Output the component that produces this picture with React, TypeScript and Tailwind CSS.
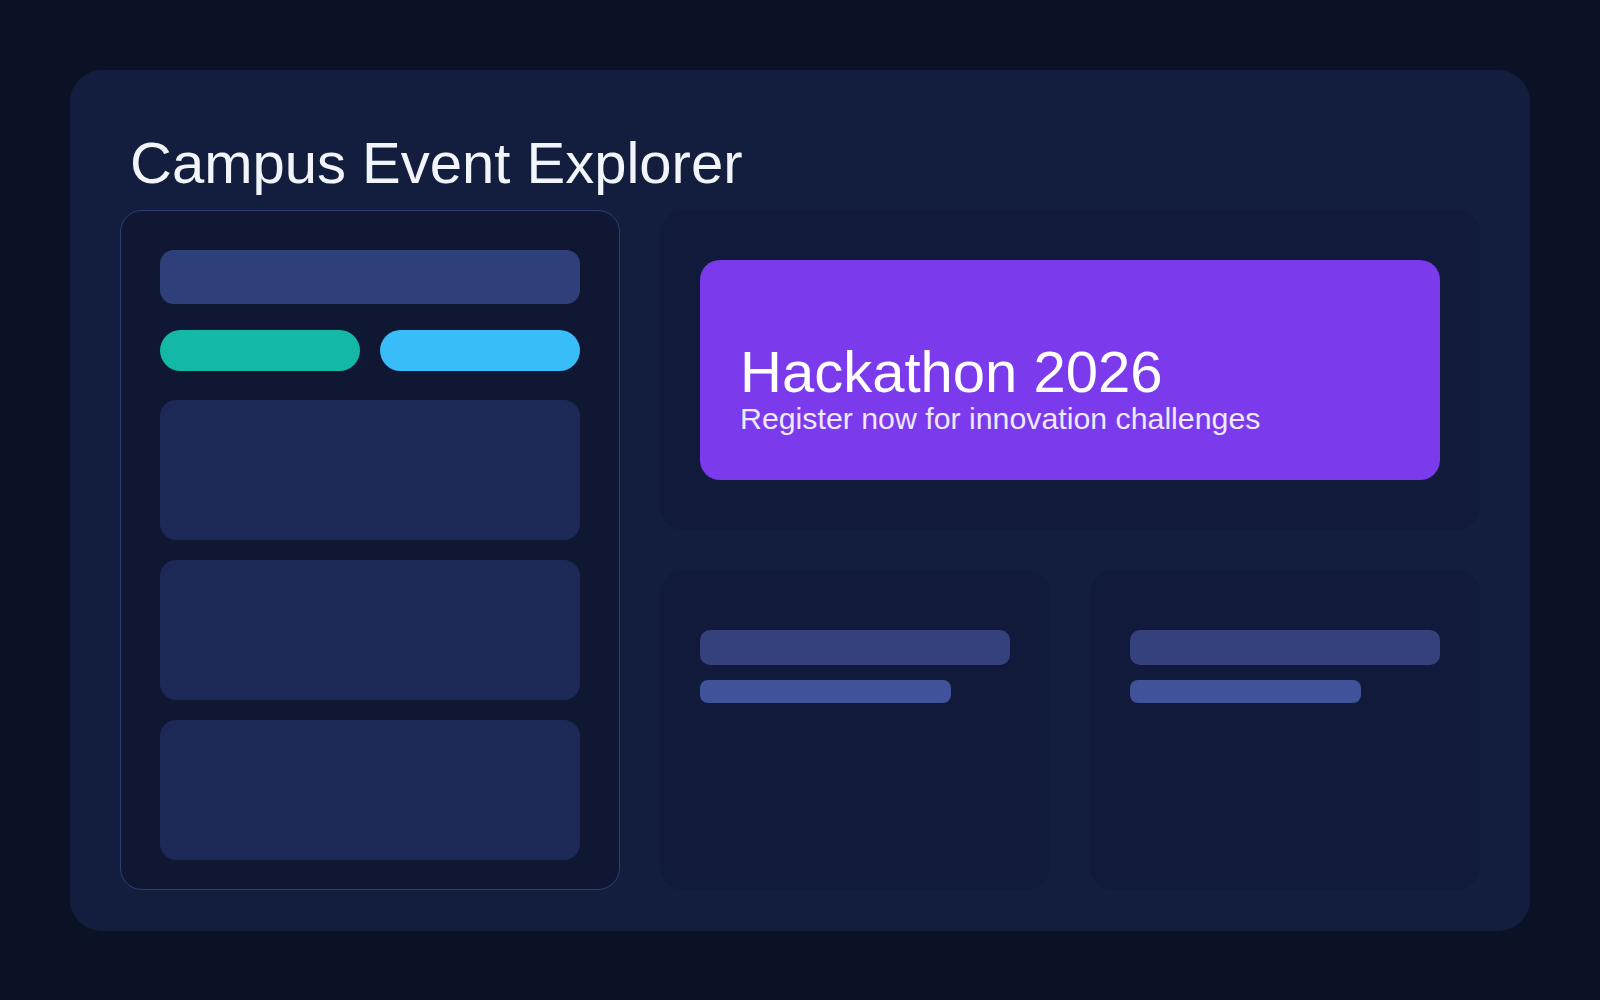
export default function App() {
  return (
    <div className="min-h-screen bg-[#0b1226] p-[70px] font-[family-name:'Liberation_Sans',Arial,sans-serif]">
      <div className="h-[861px] rounded-[32px] bg-[#131e3f] px-[50px] pt-[50px]">
        <h1 className="mb-[4px] ml-[10px] text-[58px] leading-[86px] font-normal text-[#f1f5f9]">
          Campus Event Explorer
        </h1>

        <div className="flex gap-[40px]">
          {/* filters + list */}
          <aside className="flex h-[680px] w-[500px] flex-col rounded-[22px] border border-[#2c3d78] bg-[#0f1733] px-[39px] pt-[39px]">
            <div className="h-[54px] shrink-0 rounded-[14px] bg-[#2f3f7a]" />
            <div className="mt-[26px] flex shrink-0 gap-[20px]">
              <div className="h-[41px] flex-1 rounded-full bg-[#14b8a6]" />
              <div className="h-[41px] flex-1 rounded-full bg-[#38bdf8]" />
            </div>
            <div className="mt-[29px] flex shrink-0 flex-col gap-[20px]">
              <div className="h-[140px] rounded-[16px] bg-[#1c2956]" />
              <div className="h-[140px] rounded-[16px] bg-[#1c2956]" />
              <div className="h-[140px] rounded-[16px] bg-[#1c2956]" />
            </div>
          </aside>

          <section className="flex flex-1 flex-col gap-[40px]">
            <div className="h-[320px] rounded-[24px] bg-[#111a3a] px-[40px] py-[50px]">
              <div className="h-[220px] rounded-[20px] bg-[#7c3aed] px-[40px] pt-[83px]">
                <h2 className="text-[58px] leading-none font-normal text-white">Hackathon 2026</h2>
                <p className="mt-[3px] text-[30.3px] leading-none text-[#ede9fe]">
                  Register now for innovation challenges
                </p>
              </div>
            </div>

            <div className="grid h-[320px] grid-cols-2 gap-[40px]">
              <div className="rounded-[24px] bg-[#111a3a] px-[40px] pt-[60px]">
                <div className="h-[35px] rounded-[10px] bg-[#35417c]" />
                <div className="mt-[15px] h-[23px] w-[251px] rounded-[8px] bg-[#40529a]" />
              </div>
              <div className="rounded-[24px] bg-[#111a3a] px-[40px] pt-[60px]">
                <div className="h-[35px] rounded-[10px] bg-[#35417c]" />
                <div className="mt-[15px] h-[23px] w-[231px] rounded-[8px] bg-[#40529a]" />
              </div>
            </div>
          </section>
        </div>
      </div>
    </div>
  );
}
